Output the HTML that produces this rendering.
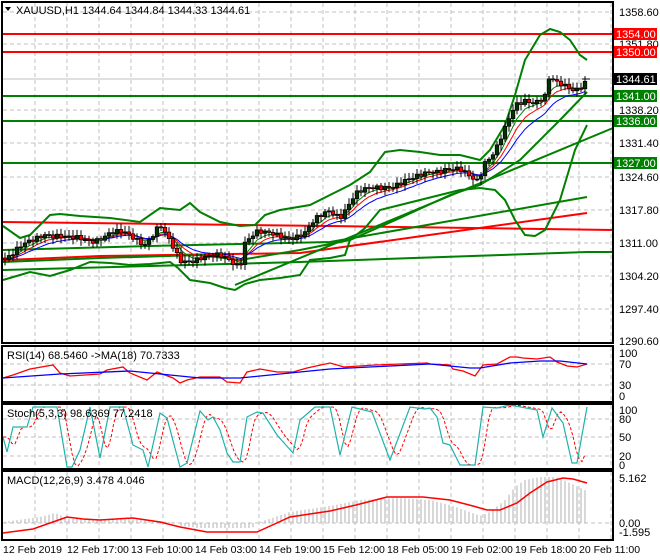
<!DOCTYPE html>
<html><head><meta charset="utf-8"><style>
html,body{margin:0;padding:0;background:#fff;}
svg{display:block;font-family:"Liberation Sans",Tahoma,sans-serif;}
</style></head><body>
<svg id="s" width="660" height="560" viewBox="0 0 660 560" xmlns="http://www.w3.org/2000/svg">
<rect width="660" height="560" fill="#fff"/>
<g id="grid" stroke="#c0c0c0" stroke-width="1" stroke-dasharray="4,3" fill="none"></g>
<g id="main"></g>
<g id="frames" fill="none" stroke="#000" stroke-width="2">
<rect x="2" y="2" width="611" height="341"/>
<rect x="2" y="346" width="611" height="56"/>
<rect x="2" y="404" width="611" height="65"/>
<rect x="2" y="471" width="611" height="69"/>
</g>
<g font-size="11" fill="#000">
<text x="16" y="14">XAUUSD,H1  1344.64 1344.84 1344.33 1344.61</text>
<text x="7" y="359">RSI(14) 68.5460  -&gt;MA(18) 70.7333</text>
<text x="7" y="417">Stoch(5,3,3) 98.6369 77.2418</text>
<text x="7" y="484">MACD(12,26,9) 3.478 4.046</text>
</g>
<path d="M5 7 L11 7 L8 11 Z" fill="#000"/>
<g font-size="11" fill="#000" id="axis">
<text x="619" y="16">1358.60</text>
<text x="619" y="48">1351.80</text>
<text x="619" y="114">1338.20</text>
<text x="619" y="147">1331.40</text>
<text x="619" y="181">1324.60</text>
<text x="619" y="214">1317.80</text>
<text x="619" y="247">1311.00</text>
<text x="619" y="280">1304.20</text>
<text x="619" y="313">1297.40</text>
<text x="619" y="345">1290.60</text>
<text x="619" y="357">100</text>
<text x="619" y="368">70</text>
<text x="619" y="389">30</text>
<text x="619" y="400">0</text>
<text x="619" y="414">100</text>
<text x="619" y="423">80</text>
<text x="619" y="441">50</text>
<text x="619" y="460">20</text>
<text x="619" y="469">0</text>
<text x="619" y="482">5.162</text>
<text x="619" y="527">0.00</text>
<text x="619" y="536">-1.595</text>
</g>
<g id="tags" font-size="11"></g>
<g font-size="10.5" fill="#000">
<text x="3" y="553">12 Feb 2019</text>
<text x="67" y="553">12 Feb 17:00</text>
<text x="131" y="553">13 Feb 10:00</text>
<text x="195" y="553">14 Feb 03:00</text>
<text x="259" y="553">14 Feb 19:00</text>
<text x="323" y="553">15 Feb 12:00</text>
<text x="387" y="553">18 Feb 05:00</text>
<text x="451" y="553">19 Feb 02:00</text>
<text x="515" y="553">19 Feb 18:00</text>
<text x="579" y="553">20 Feb 11:00</text>
</g>
</svg>
<script>
(function(){
var NS="http://www.w3.org/2000/svg";
function el(p,t,a){var e=document.createElementNS(NS,t);for(var k in a)e.setAttribute(k,a[k]);p.appendChild(e);return e;}
var G=document.getElementById('grid'),M=document.getElementById('main'),T=document.getElementById('tags');
for(var x=35;x<613;x+=32){el(G,'line',{x1:x,y1:3,x2:x,y2:343});el(G,'line',{x1:x,y1:347,x2:x,y2:401});el(G,'line',{x1:x,y1:405,x2:x,y2:468});el(G,'line',{x1:x,y1:472,x2:x,y2:539});}
[12,44,110,143,177,210,243,276,309].forEach(function(y){el(G,'line',{x1:3,y1:y,x2:612,y2:y});});
[364,385].forEach(function(y){el(G,'line',{x1:3,y1:y,x2:612,y2:y});});
[419,437,456].forEach(function(y){el(G,'line',{x1:3,y1:y,x2:612,y2:y});});
el(G,'line',{x1:3,y1:523,x2:612,y2:523});
function interp(pts,x){for(var i=1;i<pts.length;i++){if(x<=pts[i][0]){var a=pts[i-1],b=pts[i];var t=(x-a[0])/(b[0]-a[0]||1);return a[1]+t*(b[1]-a[1]);}}return pts[pts.length-1][1];}
function poly(p,pts,c,w,extra){var a={points:pts.map(function(q){return q[0]+','+q[1];}).join(' '),fill:'none',stroke:c,'stroke-width':w};for(var k in extra)a[k]=extra[k];return el(p,'polyline',a);}
el(M,'line',{x1:3,y1:79,x2:612,y2:79,stroke:'#c0c0c0','stroke-width':1});
el(M,'line',{x1:3,y1:34,x2:613,y2:34,stroke:'#ff0000','stroke-width':2});
el(M,'line',{x1:3,y1:52,x2:613,y2:52,stroke:'#ff0000','stroke-width':2});
el(M,'line',{x1:3,y1:96,x2:613,y2:96,stroke:'#008000','stroke-width':2});
el(M,'line',{x1:3,y1:121,x2:613,y2:121,stroke:'#008000','stroke-width':2});
el(M,'line',{x1:3,y1:163,x2:613,y2:163,stroke:'#008000','stroke-width':2});
poly(M,[[3,222],[330,226],[613,230]],'#ff0000',2);
poly(M,[[3,260],[30,259],[100,256],[300,253],[587,213]],'#ff0000',2);
poly(M,[[3,270],[300,262],[587,252],[613,252]],'#008000',2);
poly(M,[[3,250],[150,246],[330,242],[587,197]],'#008000',2);
poly(M,[[235,285],[613,128]],'#008000',2);
poly(M,[[3,262],[100,258],[200,255],[240,260],[300,250],[350,240],[400,218],[450,195],[480,185],[520,160],[560,120],[587,92]],'#008000',2);
var up=[[3,226],[20,238],[30,235],[50,215],[60,214],[80,216],[110,218],[140,222],[160,208],[180,210],[190,203],[200,212],[220,222],[240,226],[255,225],[265,215],[280,210],[310,205],[330,195],[350,185],[370,172],[385,152],[400,150],[420,152],[440,155],[460,155],[480,160],[490,150],[505,125],[515,95],[525,60],[540,35],[550,29],[560,32],[570,40],[580,55],[587,60]];
var lo=[[3,280],[20,275],[30,272],[50,276],[70,270],[90,262],[110,263],[130,265],[150,264],[170,262],[178,268],[190,280],[210,283],[225,288],[235,290],[245,284],[260,280],[280,278],[300,275],[310,260],[330,258],[345,255],[350,240],[365,228],[380,210],[400,205],[420,200],[440,195],[460,190],[480,188],[495,190],[505,200],[515,220],[525,235],[535,236],[545,230],[560,200],[575,150],[587,125]];
poly(M,up,'#008000',2);poly(M,lo,'#008000',2);
var pp=[[3,258],[10,255],[30,243],[45,232],[58,235],[70,240],[90,240],[110,233],[125,235],[145,242],[160,225],[165,235],[180,262],[200,256],[220,258],[232,262],[240,265],[245,240],[255,232],[270,236],[290,236],[305,233],[315,222],[330,210],[340,215],[355,195],[370,190],[385,185],[400,183],[415,180],[430,170],[445,168],[460,172],[470,178],[478,180],[485,160],[495,150],[505,130],[515,108],[525,100],[535,100],[545,95],[550,75],[555,85],[565,88],[575,90],[585,80]];
var C=[],X=[];var prev=interp(pp,3);
for(var x=5;x<=585;x+=4){var c=interp(pp,x)+3*Math.sin(x*1.7)+2*Math.sin(x*0.63);X.push(x);C.push([prev,c]);prev=c;}
function ema(n){var k=2/(n+1),v=C[0][1],r=[];for(var i=0;i<C.length;i++){v=C[i][1]*k+v*(1-k);r.push([X[i],v.toFixed(1)]);}return r;}
poly(M,ema(5),'#008000',1);poly(M,ema(8),'#ff0000',1);poly(M,ema(13),'#0000ff',1);
for(var i=0;i<C.length;i++){var o=C[i][0],c=C[i][1],x=X[i];var hi=Math.min(o,c)-2-Math.abs(Math.sin(x*2.3))*4,lw=Math.max(o,c)+2+Math.abs(Math.cos(x*1.9))*4;
el(M,'line',{x1:x,y1:hi,x2:x,y2:lw,stroke:'#000','stroke-width':1});
var bull=c<o;var h=Math.max(1,Math.abs(c-o));el(M,'rect',{x:x-1.8,y:Math.min(o,c),width:3.6,height:h,fill:bull?'#003300':'#ff0000',stroke:'#000','stroke-width':0.7});}
poly(M,[[3,378],[13,375],[30,369],[53,365],[60,373],[70,376],[100,374],[107,370],[123,367],[130,373],[147,380],[157,372],[173,378],[180,383],[187,380],[200,377],[220,377],[227,382],[240,383],[247,372],[260,369],[277,372],[293,372],[307,368],[330,363],[344,367],[375,365],[427,363],[430,364],[450,365],[453,369],[463,371],[475,376],[483,365],[497,364],[510,357],[517,357],[523,358],[537,359],[550,357],[557,362],[567,366],[577,367],[587,364]],'#ff0000',1.3);
poly(M,[[3,378],[60,374],[130,371],[200,378],[240,378],[300,372],[330,369],[430,364],[470,368],[480,368],[510,363],[540,361],[560,361],[587,364]],'#0000ff',1.3);
var K=[[3,437],[7,452],[13,427],[27,427],[33,407],[57,407],[67,467],[72,467],[80,450],[90,407],[100,458],[110,407],[123,407],[133,445],[143,450],[148,467],[160,413],[167,418],[180,467],[187,463],[200,411],[208,420],[213,417],[220,430],[227,453],[233,462],[240,462],[247,417],[257,412],[263,413],[277,435],[293,453],[300,420],[315,407],[330,407],[340,455],[352,407],[372,412],[390,460],[410,407],[425,409],[430,408],[437,417],[443,443],[450,445],[460,465],[475,465],[483,407],[497,408],[510,405],[537,410],[543,437],[552,408],[563,423],[572,463],[577,463],[587,407]];
var D=[];for(var x=3;x<=587;x+=3){var s=0;for(var j=0;j<4;j++)s+=interp(K,Math.max(3,x-4-j*2));D.push([x,(s/4).toFixed(1)]);}
poly(M,D,'#ff0000',1,{'stroke-dasharray':'3,2'});
poly(M,K,'#20b2aa',1.2);
var H=[[3,522],[40,517],[55,513],[70,519],[110,519],[150,520],[180,523],[200,525],[250,525],[260,522],[290,512],[330,506],[360,500],[400,498],[430,500],[450,505],[470,512],[480,516],[490,512],[505,500],[515,487],[525,480],[540,477],[555,477],[570,483],[587,491]];
for(var x=5;x<=587;x+=4){var y=interp(H,x);el(M,'line',{x1:x,y1:523,x2:x,y2:(y>=523?y+3:y).toFixed(1),stroke:'#b0b0b0','stroke-width':1});}
poly(M,[[3,533],[33,529],[67,517],[83,519],[100,520],[133,518],[160,522],[180,527],[207,532],[257,532],[290,517],[330,511],[356,505],[387,497],[423,497],[450,500],[473,506],[487,510],[500,510],[517,503],[530,493],[547,482],[563,478],[573,479],[587,483]],'#ff0000',1.5);
el(M,'line',{x1:582,y1:79,x2:590,y2:79,stroke:'#000','stroke-width':1});
function tag(y,bg,txt){el(T,'rect',{x:614,y:y-6,width:43,height:12,fill:bg});var t=el(T,'text',{x:616,y:y+4,fill:'#fff'});t.textContent=txt;}
tag(34,'#ff0000','1354.00');tag(52,'#ff0000','1350.00');tag(79,'#000','1344.61');tag(96,'#008000','1341.00');tag(121,'#008000','1336.00');tag(163,'#008000','1327.00');
})();
</script>
</body></html>
